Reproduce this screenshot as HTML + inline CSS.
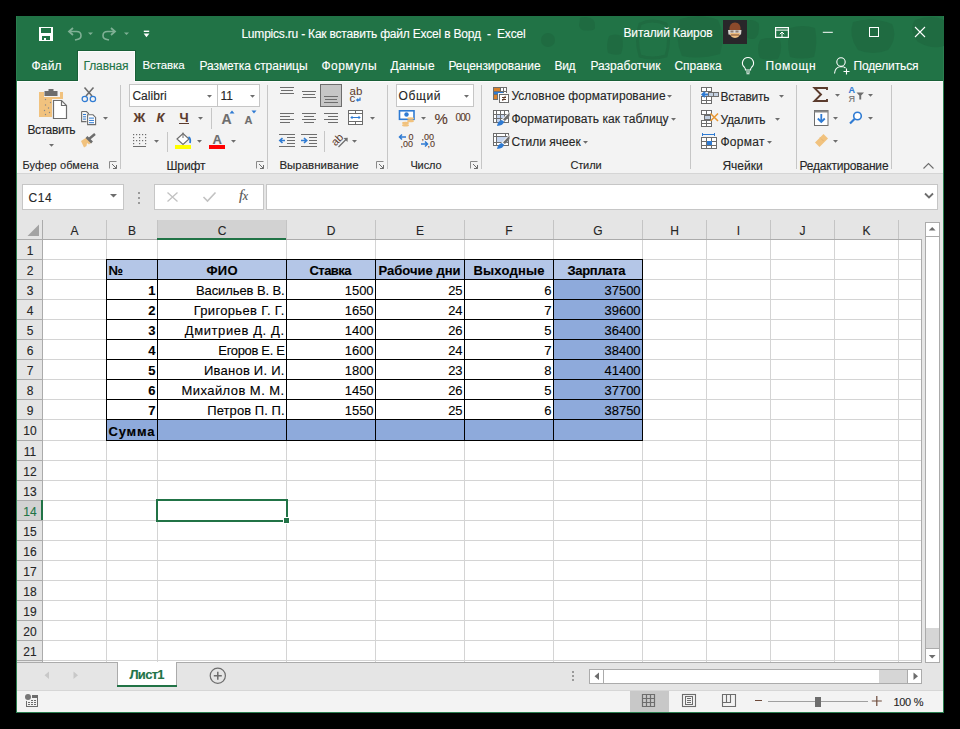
<!DOCTYPE html><html><head><meta charset="utf-8"><style>*{margin:0;padding:0;box-sizing:border-box}
html,body{width:960px;height:729px;overflow:hidden;background:#000}
.a{position:absolute}
.t{position:absolute;white-space:pre;font-family:"Liberation Sans",sans-serif;line-height:1;-webkit-text-stroke:0.12px currentColor}
svg{position:absolute;overflow:visible}</style></head><body>
<div class="a" style="left:16px;top:16px;width:928px;height:697px;background:#f3f3f3;"></div>
<div class="a" style="left:16px;top:16px;width:928px;height:65px;background:#217346;"></div>
<div class="a" style="left:16px;top:16px;width:1px;height:697px;background:#2a7e4f;"></div>
<div class="a" style="left:943px;top:16px;width:1px;height:697px;background:#2a7e4f;"></div>
<div class="a" style="left:16px;top:712px;width:928px;height:1px;background:#2a7e4f;"></div>
<div class="a" style="left:17px;top:80px;width:926px;height:1px;background:#185f37;"></div>
<div class="a" style="left:17px;top:81px;width:926px;height:1px;background:#fcfcfc;"></div>
<div class="a" style="left:17px;top:81px;width:1px;height:92px;background:#fcfcfc;"></div>
<div class="a" style="left:77px;top:50px;width:59px;height:31px;background:#185f37;"></div>
<div class="a" style="left:78px;top:51px;width:57px;height:31px;background:#fcfcfc;"></div>
<div class="a" style="left:79px;top:52px;width:55px;height:30px;background:#f3f3f3;"></div>
<div class="a" style="left:17px;top:173px;width:926px;height:1px;background:#d5d5d5;"></div>
<div class="a" style="left:17px;top:174px;width:926px;height:46px;background:#e5e5e5;"></div>
<svg style="left:540px;top:16px;" width="404" height="64" viewBox="0 0 404 64"><g fill="#1f6b41">
<path d="M40,3 Q38,1 46,1 Q56,2 55,10 Q56,15 48,14.5 Q39,15 39,9 Z"/>
<circle cx="8" cy="24" r="7"/>
<path d="M69,20 Q75,17 82,20 Q84,30 81,38 Q75,40 68,37 Q66,28 69,20 Z"/>
<path d="M100,8 Q112,2 126,8 Q131,24 126,40 Q112,44 100,40 Q95,24 100,8 Z" fill="none" stroke="#1f6b41" stroke-width="3"/>
<path d="M140,3 Q160,-3 178,4 Q186,20 180,38 Q160,44 142,40 Q134,22 140,3 Z"/>
<path d="M205,5 Q214,2 219,8 Q220,20 214,23 Q206,24 204,16 Z"/>
<path d="M220,24 Q228,20 240,24 Q243,34 238,43 Q228,45 220,42 Q216,33 220,24 Z"/>
<path d="M250,12 Q262,8 275,12 Q278,28 274,41 Q262,44 250,41 Q246,26 250,12 Z"/>
<path d="M313,6 Q333,0 352,8 Q358,22 348,34 Q333,40 318,34 Q308,20 313,6 Z"/>
<path d="M375,4 Q392,-2 404,4 V30 Q392,34 378,26 Q368,14 375,4 Z"/>
</g></svg>
<div class="t" style="left:241.40px;top:28px;font-size:12px;color:#ffffff;letter-spacing:-0.203px;">Lumpics.ru - Как вставить файл Excel в Ворд  -  Excel</div>
<div class="t" style="left:623.40px;top:27px;font-size:12px;color:#ffffff;letter-spacing:-0.106px;">Виталий Каиров</div>
<div class="t" style="left:31.40px;top:60px;font-size:12px;color:#ffffff;letter-spacing:0.228px;">Файл</div>
<div class="t" style="left:83.40px;top:60px;font-size:12px;color:#217346;letter-spacing:-0.081px;">Главная</div>
<div class="t" style="left:142.40px;top:60px;font-size:11.5px;color:#ffffff;letter-spacing:-0.092px;">Вставка</div>
<div class="t" style="left:199.40px;top:60px;font-size:12px;color:#ffffff;letter-spacing:-0.042px;">Разметка страницы</div>
<div class="t" style="left:321.40px;top:60px;font-size:12px;color:#ffffff;letter-spacing:0.497px;">Формулы</div>
<div class="t" style="left:390.40px;top:60px;font-size:12px;color:#ffffff;letter-spacing:0.168px;">Данные</div>
<div class="t" style="left:448.40px;top:60px;font-size:12px;color:#ffffff;letter-spacing:-0.036px;">Рецензирование</div>
<div class="t" style="left:554.40px;top:60px;font-size:12px;color:#ffffff;letter-spacing:-0.259px;">Вид</div>
<div class="t" style="left:590.40px;top:60px;font-size:12px;color:#ffffff;letter-spacing:0.022px;">Разработчик</div>
<div class="t" style="left:674.40px;top:60px;font-size:12px;color:#ffffff;letter-spacing:0.020px;">Справка</div>
<div class="t" style="left:765.40px;top:60px;font-size:12px;color:#ffffff;letter-spacing:0.693px;">Помощн</div>
<div class="t" style="left:853.40px;top:60px;font-size:12px;color:#ffffff;letter-spacing:-0.118px;">Поделиться</div>
<div class="a" style="left:17px;top:220px;width:926px;height:443px;background:#e5e5e5;"></div>
<div class="a" style="left:43px;top:240px;width:878px;height:422px;background:#ffffff;"></div>
<div class="a" style="left:17px;top:240px;width:25px;height:423px;background:#e5e5e5;"></div>
<div class="a" style="left:157px;top:220px;width:129px;height:19px;background:#d2d2d2;"></div>
<div class="a" style="left:17px;top:500px;width:25px;height:20px;background:#d2d2d2;"></div>
<div class="a" style="left:43px;top:259px;width:878px;height:1px;background:#d4d4d4;"></div>
<div class="a" style="left:17px;top:259px;width:25px;height:1px;background:#ababab;"></div>
<div class="a" style="left:43px;top:279px;width:878px;height:1px;background:#d4d4d4;"></div>
<div class="a" style="left:17px;top:279px;width:25px;height:1px;background:#ababab;"></div>
<div class="a" style="left:43px;top:299px;width:878px;height:1px;background:#d4d4d4;"></div>
<div class="a" style="left:17px;top:299px;width:25px;height:1px;background:#ababab;"></div>
<div class="a" style="left:43px;top:319px;width:878px;height:1px;background:#d4d4d4;"></div>
<div class="a" style="left:17px;top:319px;width:25px;height:1px;background:#ababab;"></div>
<div class="a" style="left:43px;top:339px;width:878px;height:1px;background:#d4d4d4;"></div>
<div class="a" style="left:17px;top:339px;width:25px;height:1px;background:#ababab;"></div>
<div class="a" style="left:43px;top:359px;width:878px;height:1px;background:#d4d4d4;"></div>
<div class="a" style="left:17px;top:359px;width:25px;height:1px;background:#ababab;"></div>
<div class="a" style="left:43px;top:379px;width:878px;height:1px;background:#d4d4d4;"></div>
<div class="a" style="left:17px;top:379px;width:25px;height:1px;background:#ababab;"></div>
<div class="a" style="left:43px;top:399px;width:878px;height:1px;background:#d4d4d4;"></div>
<div class="a" style="left:17px;top:399px;width:25px;height:1px;background:#ababab;"></div>
<div class="a" style="left:43px;top:419px;width:878px;height:1px;background:#d4d4d4;"></div>
<div class="a" style="left:17px;top:419px;width:25px;height:1px;background:#ababab;"></div>
<div class="a" style="left:43px;top:440px;width:878px;height:1px;background:#d4d4d4;"></div>
<div class="a" style="left:17px;top:440px;width:25px;height:1px;background:#ababab;"></div>
<div class="a" style="left:43px;top:460px;width:878px;height:1px;background:#d4d4d4;"></div>
<div class="a" style="left:17px;top:460px;width:25px;height:1px;background:#ababab;"></div>
<div class="a" style="left:43px;top:480px;width:878px;height:1px;background:#d4d4d4;"></div>
<div class="a" style="left:17px;top:480px;width:25px;height:1px;background:#ababab;"></div>
<div class="a" style="left:43px;top:500px;width:878px;height:1px;background:#d4d4d4;"></div>
<div class="a" style="left:17px;top:500px;width:25px;height:1px;background:#ababab;"></div>
<div class="a" style="left:43px;top:520px;width:878px;height:1px;background:#d4d4d4;"></div>
<div class="a" style="left:17px;top:520px;width:25px;height:1px;background:#ababab;"></div>
<div class="a" style="left:43px;top:540px;width:878px;height:1px;background:#d4d4d4;"></div>
<div class="a" style="left:17px;top:540px;width:25px;height:1px;background:#ababab;"></div>
<div class="a" style="left:43px;top:560px;width:878px;height:1px;background:#d4d4d4;"></div>
<div class="a" style="left:17px;top:560px;width:25px;height:1px;background:#ababab;"></div>
<div class="a" style="left:43px;top:580px;width:878px;height:1px;background:#d4d4d4;"></div>
<div class="a" style="left:17px;top:580px;width:25px;height:1px;background:#ababab;"></div>
<div class="a" style="left:43px;top:600px;width:878px;height:1px;background:#d4d4d4;"></div>
<div class="a" style="left:17px;top:600px;width:25px;height:1px;background:#ababab;"></div>
<div class="a" style="left:43px;top:620px;width:878px;height:1px;background:#d4d4d4;"></div>
<div class="a" style="left:17px;top:620px;width:25px;height:1px;background:#ababab;"></div>
<div class="a" style="left:43px;top:640px;width:878px;height:1px;background:#d4d4d4;"></div>
<div class="a" style="left:17px;top:640px;width:25px;height:1px;background:#ababab;"></div>
<div class="a" style="left:43px;top:660px;width:878px;height:1px;background:#d4d4d4;"></div>
<div class="a" style="left:17px;top:660px;width:25px;height:1px;background:#ababab;"></div>
<div class="a" style="left:17px;top:239px;width:904px;height:1px;background:#ababab;"></div>
<div class="a" style="left:17px;top:662px;width:905px;height:1px;background:#ababab;"></div>
<div class="a" style="left:106px;top:240px;width:1px;height:422px;background:#d4d4d4;"></div>
<div class="a" style="left:106px;top:220px;width:1px;height:19px;background:#c4c4c4;"></div>
<div class="a" style="left:157px;top:240px;width:1px;height:422px;background:#d4d4d4;"></div>
<div class="a" style="left:157px;top:220px;width:1px;height:19px;background:#c4c4c4;"></div>
<div class="a" style="left:286px;top:240px;width:1px;height:422px;background:#d4d4d4;"></div>
<div class="a" style="left:286px;top:220px;width:1px;height:19px;background:#c4c4c4;"></div>
<div class="a" style="left:375px;top:240px;width:1px;height:422px;background:#d4d4d4;"></div>
<div class="a" style="left:375px;top:220px;width:1px;height:19px;background:#c4c4c4;"></div>
<div class="a" style="left:464px;top:240px;width:1px;height:422px;background:#d4d4d4;"></div>
<div class="a" style="left:464px;top:220px;width:1px;height:19px;background:#c4c4c4;"></div>
<div class="a" style="left:553px;top:240px;width:1px;height:422px;background:#d4d4d4;"></div>
<div class="a" style="left:553px;top:220px;width:1px;height:19px;background:#c4c4c4;"></div>
<div class="a" style="left:642px;top:240px;width:1px;height:422px;background:#d4d4d4;"></div>
<div class="a" style="left:642px;top:220px;width:1px;height:19px;background:#c4c4c4;"></div>
<div class="a" style="left:706px;top:240px;width:1px;height:422px;background:#d4d4d4;"></div>
<div class="a" style="left:706px;top:220px;width:1px;height:19px;background:#c4c4c4;"></div>
<div class="a" style="left:770px;top:240px;width:1px;height:422px;background:#d4d4d4;"></div>
<div class="a" style="left:770px;top:220px;width:1px;height:19px;background:#c4c4c4;"></div>
<div class="a" style="left:834px;top:240px;width:1px;height:422px;background:#d4d4d4;"></div>
<div class="a" style="left:834px;top:220px;width:1px;height:19px;background:#c4c4c4;"></div>
<div class="a" style="left:898px;top:240px;width:1px;height:422px;background:#d4d4d4;"></div>
<div class="a" style="left:898px;top:220px;width:1px;height:19px;background:#c4c4c4;"></div>
<div class="a" style="left:42px;top:220px;width:1px;height:442px;background:#ababab;"></div>
<div class="a" style="left:921px;top:239px;width:1px;height:424px;background:#ababab;"></div>
<div class="a" style="left:41px;top:500px;width:2px;height:20px;background:#217346;"></div>
<div class="a" style="left:157px;top:238px;width:129px;height:2px;background:#217346;"></div>
<div class="t" style="left:70.49px;top:225px;font-size:12px;color:#262626;">A</div>
<div class="t" style="left:127.99px;top:225px;font-size:12px;color:#262626;">B</div>
<div class="t" style="left:217.66px;top:225px;font-size:12px;color:#262626;">C</div>
<div class="t" style="left:326.66px;top:225px;font-size:12px;color:#262626;">D</div>
<div class="t" style="left:415.99px;top:225px;font-size:12px;color:#262626;">E</div>
<div class="t" style="left:505.33px;top:225px;font-size:12px;color:#262626;">F</div>
<div class="t" style="left:593.33px;top:225px;font-size:12px;color:#262626;">G</div>
<div class="t" style="left:670.16px;top:225px;font-size:12px;color:#262626;">H</div>
<div class="t" style="left:736.83px;top:225px;font-size:12px;color:#262626;">I</div>
<div class="t" style="left:799.50px;top:225px;font-size:12px;color:#262626;">J</div>
<div class="t" style="left:862.49px;top:225px;font-size:12px;color:#262626;">K</div>
<div class="t" style="left:26.66px;top:245px;font-size:12px;color:#262626;">1</div>
<div class="t" style="left:26.66px;top:265px;font-size:12px;color:#262626;">2</div>
<div class="t" style="left:26.66px;top:285px;font-size:12px;color:#262626;">3</div>
<div class="t" style="left:26.66px;top:305px;font-size:12px;color:#262626;">4</div>
<div class="t" style="left:26.66px;top:325px;font-size:12px;color:#262626;">5</div>
<div class="t" style="left:26.66px;top:345px;font-size:12px;color:#262626;">6</div>
<div class="t" style="left:26.66px;top:365px;font-size:12px;color:#262626;">7</div>
<div class="t" style="left:26.66px;top:385px;font-size:12px;color:#262626;">8</div>
<div class="t" style="left:26.66px;top:405px;font-size:12px;color:#262626;">9</div>
<div class="t" style="left:23.32px;top:425px;font-size:12px;color:#262626;">10</div>
<div class="t" style="left:23.77px;top:446px;font-size:12px;color:#262626;">11</div>
<div class="t" style="left:23.32px;top:466px;font-size:12px;color:#262626;">12</div>
<div class="t" style="left:23.32px;top:486px;font-size:12px;color:#262626;">13</div>
<div class="t" style="left:23.32px;top:506px;font-size:12px;color:#217346;">14</div>
<div class="t" style="left:23.32px;top:526px;font-size:12px;color:#262626;">15</div>
<div class="t" style="left:23.32px;top:546px;font-size:12px;color:#262626;">16</div>
<div class="t" style="left:23.32px;top:566px;font-size:12px;color:#262626;">17</div>
<div class="t" style="left:23.32px;top:586px;font-size:12px;color:#262626;">18</div>
<div class="t" style="left:23.32px;top:606px;font-size:12px;color:#262626;">19</div>
<div class="t" style="left:23.32px;top:626px;font-size:12px;color:#262626;">20</div>
<div class="t" style="left:23.32px;top:646px;font-size:12px;color:#262626;">21</div>
<div class="a" style="left:107px;top:260px;width:535px;height:19px;background:#b4c6e7;"></div>
<div class="a" style="left:554px;top:280px;width:88px;height:19px;background:#8eaadb;"></div>
<div class="a" style="left:554px;top:300px;width:88px;height:19px;background:#8eaadb;"></div>
<div class="a" style="left:554px;top:320px;width:88px;height:19px;background:#8eaadb;"></div>
<div class="a" style="left:554px;top:340px;width:88px;height:19px;background:#8eaadb;"></div>
<div class="a" style="left:554px;top:360px;width:88px;height:19px;background:#8eaadb;"></div>
<div class="a" style="left:554px;top:380px;width:88px;height:19px;background:#8eaadb;"></div>
<div class="a" style="left:554px;top:400px;width:88px;height:19px;background:#8eaadb;"></div>
<div class="a" style="left:107px;top:420px;width:535px;height:20px;background:#8eaadb;"></div>
<div class="a" style="left:106px;top:259px;width:537px;height:1px;background:#000;"></div>
<div class="a" style="left:106px;top:279px;width:537px;height:1px;background:#000;"></div>
<div class="a" style="left:106px;top:299px;width:537px;height:1px;background:#000;"></div>
<div class="a" style="left:106px;top:319px;width:537px;height:1px;background:#000;"></div>
<div class="a" style="left:106px;top:339px;width:537px;height:1px;background:#000;"></div>
<div class="a" style="left:106px;top:359px;width:537px;height:1px;background:#000;"></div>
<div class="a" style="left:106px;top:379px;width:537px;height:1px;background:#000;"></div>
<div class="a" style="left:106px;top:399px;width:537px;height:1px;background:#000;"></div>
<div class="a" style="left:106px;top:419px;width:537px;height:1px;background:#000;"></div>
<div class="a" style="left:106px;top:440px;width:537px;height:1px;background:#000;"></div>
<div class="a" style="left:106px;top:259px;width:1px;height:182px;background:#000;"></div>
<div class="a" style="left:157px;top:259px;width:1px;height:182px;background:#000;"></div>
<div class="a" style="left:286px;top:259px;width:1px;height:182px;background:#000;"></div>
<div class="a" style="left:375px;top:259px;width:1px;height:182px;background:#000;"></div>
<div class="a" style="left:464px;top:259px;width:1px;height:182px;background:#000;"></div>
<div class="a" style="left:553px;top:259px;width:1px;height:182px;background:#000;"></div>
<div class="a" style="left:642px;top:259px;width:1px;height:182px;background:#000;"></div>
<div class="t" style="left:108.40px;top:264px;font-size:13px;color:#000;font-weight:700;">№</div>
<div class="t" style="left:206.40px;top:264px;font-size:13px;color:#000;font-weight:700;letter-spacing:0.319px;">ФИО</div>
<div class="t" style="left:309.40px;top:264px;font-size:13px;color:#000;font-weight:700;letter-spacing:-0.504px;">Ставка</div>
<div class="t" style="left:378.40px;top:264px;font-size:13px;color:#000;font-weight:700;letter-spacing:0.034px;">Рабочие дни</div>
<div class="t" style="left:473.40px;top:264px;font-size:13px;color:#000;font-weight:700;letter-spacing:0.227px;">Выходные</div>
<div class="t" style="left:567.40px;top:264px;font-size:13px;color:#000;font-weight:700;letter-spacing:-0.295px;">Зарплата</div>
<div class="t" style="left:148.37px;top:284px;font-size:13px;color:#000;font-weight:700;">1</div>
<div class="t" style="left:196.00px;top:284px;font-size:13px;color:#000;letter-spacing:-0.096px;">Васильев В. В.</div>
<div class="t" style="left:344.68px;top:284px;font-size:13px;color:#000;">1500</div>
<div class="t" style="left:448.13px;top:284px;font-size:13px;color:#000;">25</div>
<div class="t" style="left:544.37px;top:284px;font-size:13px;color:#000;">6</div>
<div class="t" style="left:604.44px;top:284px;font-size:13px;color:#000;">37500</div>
<div class="t" style="left:148.37px;top:304px;font-size:13px;color:#000;font-weight:700;">2</div>
<div class="t" style="left:193.67px;top:304px;font-size:13px;color:#000;letter-spacing:0.330px;">Григорьев Г. Г.</div>
<div class="t" style="left:344.68px;top:304px;font-size:13px;color:#000;">1650</div>
<div class="t" style="left:448.13px;top:304px;font-size:13px;color:#000;">24</div>
<div class="t" style="left:544.37px;top:304px;font-size:13px;color:#000;">7</div>
<div class="t" style="left:604.44px;top:304px;font-size:13px;color:#000;">39600</div>
<div class="t" style="left:148.37px;top:324px;font-size:13px;color:#000;font-weight:700;">3</div>
<div class="t" style="left:184.82px;top:324px;font-size:13px;color:#000;letter-spacing:0.580px;">Дмитриев Д. Д.</div>
<div class="t" style="left:344.68px;top:324px;font-size:13px;color:#000;">1400</div>
<div class="t" style="left:448.13px;top:324px;font-size:13px;color:#000;">26</div>
<div class="t" style="left:544.37px;top:324px;font-size:13px;color:#000;">5</div>
<div class="t" style="left:604.44px;top:324px;font-size:13px;color:#000;">36400</div>
<div class="t" style="left:148.37px;top:344px;font-size:13px;color:#000;font-weight:700;">4</div>
<div class="t" style="left:218.33px;top:344px;font-size:13px;color:#000;letter-spacing:-0.331px;">Егоров Е. Е</div>
<div class="t" style="left:344.68px;top:344px;font-size:13px;color:#000;">1600</div>
<div class="t" style="left:448.13px;top:344px;font-size:13px;color:#000;">24</div>
<div class="t" style="left:544.37px;top:344px;font-size:13px;color:#000;">7</div>
<div class="t" style="left:604.44px;top:344px;font-size:13px;color:#000;">38400</div>
<div class="t" style="left:148.37px;top:364px;font-size:13px;color:#000;font-weight:700;">5</div>
<div class="t" style="left:203.96px;top:364px;font-size:13px;color:#000;letter-spacing:0.237px;">Иванов И. И.</div>
<div class="t" style="left:344.68px;top:364px;font-size:13px;color:#000;">1800</div>
<div class="t" style="left:448.13px;top:364px;font-size:13px;color:#000;">23</div>
<div class="t" style="left:544.37px;top:364px;font-size:13px;color:#000;">8</div>
<div class="t" style="left:604.44px;top:364px;font-size:13px;color:#000;">41400</div>
<div class="t" style="left:148.37px;top:384px;font-size:13px;color:#000;font-weight:700;">6</div>
<div class="t" style="left:181.46px;top:384px;font-size:13px;color:#000;letter-spacing:0.444px;">Михайлов М. М.</div>
<div class="t" style="left:344.68px;top:384px;font-size:13px;color:#000;">1450</div>
<div class="t" style="left:448.13px;top:384px;font-size:13px;color:#000;">26</div>
<div class="t" style="left:544.37px;top:384px;font-size:13px;color:#000;">5</div>
<div class="t" style="left:604.44px;top:384px;font-size:13px;color:#000;">37700</div>
<div class="t" style="left:148.37px;top:404px;font-size:13px;color:#000;font-weight:700;">7</div>
<div class="t" style="left:207.35px;top:404px;font-size:13px;color:#000;letter-spacing:0.054px;">Петров П. П.</div>
<div class="t" style="left:344.68px;top:404px;font-size:13px;color:#000;">1550</div>
<div class="t" style="left:448.13px;top:404px;font-size:13px;color:#000;">25</div>
<div class="t" style="left:544.37px;top:404px;font-size:13px;color:#000;">6</div>
<div class="t" style="left:604.44px;top:404px;font-size:13px;color:#000;">38750</div>
<div class="t" style="left:108.40px;top:425px;font-size:13px;color:#000;font-weight:700;letter-spacing:0.863px;">Сумма</div>
<svg style="left:36px;top:24px" width="20" height="20" viewBox="36 24 20 20"><rect x="39" y="27" width="14" height="14" fill="#ffffff"/><rect x="41" y="28" width="10" height="5" fill="#217346"/><rect x="42" y="36" width="8" height="4" fill="#217346"/><rect x="44" y="38" width="2" height="2" fill="#ffffff"/></svg>
<svg style="left:64px;top:24px;" width="20" height="20" viewBox="0 0 20 20"><path d="M9,4 L5,7.5 L9,11" fill="none" stroke="#7fb095" stroke-width="1.8"/><path d="M5,7.5 H12.5 Q17,7.5 17,11.5 Q17,15 13,15.5 L11,16" fill="none" stroke="#7fb095" stroke-width="1.6"/></svg>
<svg style="left:86px;top:30px;" width="8" height="6" viewBox="0 0 8 6"><path d="M2,2.5 H7 L4.5,5 Z" fill="#7fb095"/></svg>
<svg style="left:100px;top:24px;" width="20" height="20" viewBox="0 0 20 20"><path d="M11,4 L15,7.5 L11,11" fill="none" stroke="#7fb095" stroke-width="1.8"/><path d="M15,7.5 H7.5 Q3,7.5 3,11.5 Q3,15 7,15.5 L9,16" fill="none" stroke="#7fb095" stroke-width="1.6"/></svg>
<svg style="left:122px;top:30px;" width="8" height="6" viewBox="0 0 8 6"><path d="M2,2.5 H7 L4.5,5 Z" fill="#7fb095"/></svg>
<svg style="left:140px;top:28px;" width="12" height="12" viewBox="0 0 12 12"><rect x="3.8" y="2.6" width="5.4" height="1.4" fill="#ffffff"/><path d="M3.6,5.6 H9.4 L6.5,9.2 Z" fill="#ffffff"/></svg>
<svg style="left:723px;top:20px" width="24" height="24" viewBox="723 20 24 24"><rect x="723" y="20" width="24" height="24" fill="#29262a"/><path d="M729.5,30 Q729,22.5 735,22.5 Q741,22.5 740.5,30 Z" fill="#8b4a2b"/><path d="M728,30 H741.5 L741,34.5 Q735,36 728.5,34.5 Z" fill="#d8d4d0"/><path d="M730,33 Q730,37.5 735,38 Q740,37.5 740,33 Z" fill="#eebf82"/><rect x="730.5" y="30.5" width="3" height="2" fill="#8d7c70"/><rect x="735.5" y="30.5" width="3" height="2" fill="#8d7c70"/><rect x="731" y="34.5" width="8" height="1" fill="#7a4a30"/></svg>
<svg style="left:774px;top:26px;" width="16" height="12" viewBox="0 0 16 12"><rect x="1.6" y="1.6" width="12.8" height="9.8" fill="none" stroke="#ffffff" stroke-width="1.2"/><path d="M1.5,4.1 H14.5" stroke="#ffffff" stroke-width="1"/><path d="M8,11 V6.2 M5.8,8.2 L8,6 L10.2,8.2" fill="none" stroke="#ffffff" stroke-width="1"/></svg>
<svg style="left:822px;top:31px;" width="12" height="3" viewBox="0 0 12 3"><rect x="0.8" y="0.8" width="10" height="1" fill="#ffffff"/></svg>
<svg style="left:868px;top:26px;" width="12" height="12" viewBox="0 0 12 12"><rect x="1.5" y="1.5" width="9" height="9" fill="none" stroke="#ffffff" stroke-width="1"/></svg>
<svg style="left:914px;top:26px;" width="12" height="12" viewBox="0 0 12 12"><path d="M1,1 L11,11 M11,1 L1,11" stroke="#ffffff" stroke-width="1.1"/></svg>
<svg style="left:740px;top:56px;" width="16" height="19" viewBox="0 0 16 19"><path d="M8,1.5 A5.5,5.5 0 0 0 4.2,11 Q5.5,12.5 5.5,14 H10.5 Q10.5,12.5 11.8,11 A5.5,5.5 0 0 0 8,1.5 Z" fill="none" stroke="#ffffff" stroke-width="1.1"/><path d="M6,16 H10 M6.5,17.8 H9.5" stroke="#ffffff" stroke-width="1.1"/></svg>
<svg style="left:833px;top:56px;" width="18" height="19" viewBox="0 0 18 19"><circle cx="8" cy="6" r="4.2" fill="none" stroke="#ffffff" stroke-width="1.1"/><path d="M1.5,17.5 Q2,11 8,10.5 Q11,10.5 12.5,12" fill="none" stroke="#ffffff" stroke-width="1.1"/><path d="M13.5,12.5 V18.5 M10.5,15.5 H16.5" stroke="#ffffff" stroke-width="1.1"/></svg>
<div class="a" style="left:120px;top:85px;width:1px;height:84px;background:#c6c6c6;"></div>
<div class="a" style="left:267px;top:85px;width:1px;height:84px;background:#c6c6c6;"></div>
<div class="a" style="left:387px;top:85px;width:1px;height:84px;background:#c6c6c6;"></div>
<div class="a" style="left:481px;top:85px;width:1px;height:84px;background:#c6c6c6;"></div>
<div class="a" style="left:690px;top:85px;width:1px;height:84px;background:#c6c6c6;"></div>
<div class="a" style="left:796px;top:85px;width:1px;height:84px;background:#c6c6c6;"></div>
<div class="a" style="left:891px;top:85px;width:1px;height:84px;background:#c6c6c6;"></div>
<svg style="left:36px;top:86px;" width="34" height="36" viewBox="0 0 34 36"><rect x="3" y="6" width="24" height="25" fill="#f1c27e"/><rect x="8" y="2" width="16" height="9" fill="#f3f3f3"/><rect x="8.5" y="5" width="13" height="5" fill="#6d6d6d"/><rect x="12.5" y="3" width="5" height="3" fill="#6d6d6d"/><rect x="16" y="13" width="18" height="22" fill="#f3f3f3"/><path d="M17.5,14.5 H25.5 L30.5,19.5 V32.5 H17.5 Z" fill="#fff" stroke="#6d6d6d" stroke-width="1.2"/><path d="M25.5,14.5 V19.5 H30.5" fill="none" stroke="#6d6d6d" stroke-width="1.2"/><circle cx="9.5" cy="13.5" r="0.7" fill="#888"/><circle cx="14.5" cy="16.5" r="0.7" fill="#888"/><circle cx="9.5" cy="19" r="0.7" fill="#888"/><circle cx="12.5" cy="22" r="0.7" fill="#888"/><circle cx="8.5" cy="24.5" r="0.7" fill="#888"/><circle cx="13.5" cy="26.5" r="0.7" fill="#888"/><circle cx="9.5" cy="28.5" r="0.7" fill="#888"/></svg>
<div class="t" style="left:27.40px;top:124px;font-size:12.01px;color:#262626;letter-spacing:-0.382px;">Вставить</div>
<svg style="left:49px;top:144px;" width="6" height="4" viewBox="0 0 6 4"><path d="M0,0 H5 L2.5,2.8 Z" fill="#6d6d6d"/></svg>
<svg style="left:80px;top:86px;" width="18" height="18" viewBox="0 0 18 18"><path d="M4.5,1.5 L12,10 M13.5,1.5 L6,10" stroke="#6d6d6d" stroke-width="1.6"/><circle cx="4.8" cy="13" r="2.7" fill="none" stroke="#2f7bd3" stroke-width="1.2"/><circle cx="12.9" cy="13" r="2.7" fill="none" stroke="#2f7bd3" stroke-width="1.2"/></svg>
<svg style="left:80px;top:110px;" width="18" height="17" viewBox="0 0 18 17"><path d="M1.6,1.5 H6.5 L8.5,3.5 V4 M1.6,1.5 V11.6 H6.5" fill="none" stroke="#6d6d6d" stroke-width="1.1"/><rect x="3" y="4" width="3" height="1" fill="#2f7bd3"/><rect x="3" y="6.3" width="3" height="1" fill="#2f7bd3"/><rect x="3" y="8.6" width="3" height="1" fill="#2f7bd3"/><path d="M7.6,4.8 H13 L15.6,7.4 V14.6 H7.6 Z" fill="#fff" stroke="#6d6d6d" stroke-width="1.1"/><rect x="9" y="7.6" width="5" height="1" fill="#2f7bd3"/><rect x="9" y="9.9" width="5" height="1" fill="#2f7bd3"/><rect x="9" y="12.2" width="5" height="1" fill="#2f7bd3"/></svg>
<svg style="left:103px;top:117px;" width="6" height="4" viewBox="0 0 6 4"><path d="M0,0 H5 L2.5,2.8 Z" fill="#6d6d6d"/></svg>
<svg style="left:80px;top:132px;" width="18" height="17" viewBox="0 0 18 17"><path d="M9,7 L15,2" stroke="#6d6d6d" stroke-width="2.4"/><path d="M6.5,5.5 L11.5,10.5 L9,12.5 L7,11 L6.5,14 L4,15.5 L1,9 Z" fill="#f1c27e"/><path d="M6.5,5 L12,10.5" stroke="#6d6d6d" stroke-width="2.6"/></svg>
<div class="t" style="left:22.40px;top:160px;font-size:11px;color:#262626;letter-spacing:0.132px;">Буфер обмена</div>
<svg style="left:109px;top:161px;" width="9" height="8" viewBox="0 0 9 8"><path d="M0.5,7.5 V0.5 H7.5" fill="none" stroke="#8a8a8a" stroke-width="1"/><path d="M3,3 L7.5,7.5 M4,7.5 H7.5 V4" fill="none" stroke="#6d6d6d" stroke-width="1"/></svg>
<div class="a" style="left:129px;top:84px;width:131px;height:23px;background:#c6c6c6;"></div>
<div class="a" style="left:130px;top:85px;width:87px;height:21px;background:#ffffff;"></div>
<div class="a" style="left:218px;top:85px;width:41px;height:21px;background:#ffffff;"></div>
<div class="t" style="left:132.40px;top:90px;font-size:12px;color:#262626;letter-spacing:0.031px;">Calibri</div>
<svg style="left:207px;top:95px;" width="6" height="4" viewBox="0 0 6 4"><path d="M0,0 H5 L2.5,2.8 Z" fill="#6d6d6d"/></svg>
<div class="t" style="left:220.40px;top:90px;font-size:12px;color:#262626;">11</div>
<svg style="left:250px;top:95px;" width="6" height="4" viewBox="0 0 6 4"><path d="M0,0 H5 L2.5,2.8 Z" fill="#6d6d6d"/></svg>
<div class="t" style="left:133.40px;top:111px;font-size:13px;color:#5b3b2d;font-weight:700;">Ж</div>
<div class="t" style="left:156.40px;top:111px;font-size:13px;color:#5b3b2d;font-weight:700;font-style:italic;">К</div>
<div class="t" style="left:179.40px;top:111px;font-size:13px;color:#5b3b2d;font-weight:700;">Ч</div>
<div class="a" style="left:179px;top:123px;width:10px;height:1px;background:#5b3b2d;"></div>
<svg style="left:198px;top:117px;" width="6" height="4" viewBox="0 0 6 4"><path d="M0,0 H5 L2.5,2.8 Z" fill="#6d6d6d"/></svg>
<div class="a" style="left:211px;top:108px;width:1px;height:21px;background:#c6c6c6;"></div>
<div class="t" style="left:221.40px;top:112px;font-size:14px;color:#6d6d6d;font-weight:700;">A</div>
<svg style="left:229px;top:110px;" width="7" height="4" viewBox="0 0 7 4"><path d="M0.5,3.5 H5.5 L3,0.5 Z" fill="#2f7bd3"/></svg>
<div class="t" style="left:244.40px;top:115px;font-size:11px;color:#6d6d6d;font-weight:700;">A</div>
<svg style="left:251px;top:110px;" width="7" height="4" viewBox="0 0 7 4"><path d="M0.5,0.5 H5.5 L3,3.5 Z" fill="#2f7bd3"/></svg>
<svg style="left:130px;top:130px" width="20" height="20" viewBox="130 130 20 20"><rect x="133" y="134" width="1.2" height="1.2" fill="#6d6d6d"/><rect x="136" y="134" width="1.2" height="1.2" fill="#6d6d6d"/><rect x="139" y="134" width="1.2" height="1.2" fill="#6d6d6d"/><rect x="142" y="134" width="1.2" height="1.2" fill="#6d6d6d"/><rect x="145" y="134" width="1.2" height="1.2" fill="#6d6d6d"/><rect x="133" y="137" width="1.2" height="1.2" fill="#6d6d6d"/><rect x="139" y="137" width="1.2" height="1.2" fill="#6d6d6d"/><rect x="145" y="137" width="1.2" height="1.2" fill="#6d6d6d"/><rect x="133" y="140" width="1.2" height="1.2" fill="#6d6d6d"/><rect x="136" y="140" width="1.2" height="1.2" fill="#6d6d6d"/><rect x="139" y="140" width="1.2" height="1.2" fill="#6d6d6d"/><rect x="142" y="140" width="1.2" height="1.2" fill="#6d6d6d"/><rect x="145" y="140" width="1.2" height="1.2" fill="#6d6d6d"/><rect x="133" y="143" width="1.2" height="1.2" fill="#6d6d6d"/><rect x="139" y="143" width="1.2" height="1.2" fill="#6d6d6d"/><rect x="145" y="143" width="1.2" height="1.2" fill="#6d6d6d"/><rect x="133" y="146" width="13" height="1" fill="#6d6d6d"/></svg>
<svg style="left:154px;top:140px;" width="6" height="4" viewBox="0 0 6 4"><path d="M0,0 H5 L2.5,2.8 Z" fill="#6d6d6d"/></svg>
<div class="a" style="left:167px;top:132px;width:1px;height:20px;background:#c6c6c6;"></div>
<svg style="left:174px;top:132px;" width="19" height="18" viewBox="0 0 19 18"><path d="M3,7 L9,1.5 L15,7 L9,12.5 Z" fill="#fff" stroke="#6d6d6d" stroke-width="1.1"/><path d="M9,6 V0.5" stroke="#6d6d6d" stroke-width="1"/><path d="M14.5,5 Q17,6.5 16,11" fill="none" stroke="#2f7bd3" stroke-width="1.8"/><rect x="1" y="13" width="16" height="4" fill="#ffff00"/></svg>
<svg style="left:197px;top:140px;" width="6" height="4" viewBox="0 0 6 4"><path d="M0,0 H5 L2.5,2.8 Z" fill="#6d6d6d"/></svg>
<div class="t" style="left:212.40px;top:133px;font-size:13px;color:#6d6d6d;font-weight:700;">A</div>
<div class="a" style="left:209px;top:145px;width:16px;height:4px;background:#ff0000;"></div>
<svg style="left:231px;top:140px;" width="6" height="4" viewBox="0 0 6 4"><path d="M0,0 H5 L2.5,2.8 Z" fill="#6d6d6d"/></svg>
<div class="t" style="left:166.40px;top:160px;font-size:12px;color:#262626;letter-spacing:-0.071px;">Шрифт</div>
<svg style="left:256px;top:161px;" width="9" height="8" viewBox="0 0 9 8"><path d="M0.5,7.5 V0.5 H7.5" fill="none" stroke="#8a8a8a" stroke-width="1"/><path d="M3,3 L7.5,7.5 M4,7.5 H7.5 V4" fill="none" stroke="#6d6d6d" stroke-width="1"/></svg>
<svg style="left:278px;top:84px;" width="18" height="16" viewBox="0 0 18 16"><rect x="2" y="3" width="14" height="1" fill="#6d6d6d"/><rect x="3" y="6" width="12" height="1" fill="#6d6d6d"/><rect x="2" y="9" width="14" height="1" fill="#6d6d6d"/></svg>
<svg style="left:300px;top:84px;" width="18" height="16" viewBox="0 0 18 16"><rect x="2" y="7" width="14" height="1" fill="#6d6d6d"/><rect x="3" y="10" width="12" height="1" fill="#6d6d6d"/><rect x="2" y="13" width="14" height="1" fill="#6d6d6d"/></svg>
<div class="a" style="left:320px;top:84px;width:22px;height:23px;background:#6d6d6d;"></div>
<div class="a" style="left:321px;top:85px;width:20px;height:21px;background:#c6c6c6;"></div>
<svg style="left:320px;top:84px;" width="22" height="23" viewBox="0 0 22 23"><rect x="4" y="12" width="14" height="1" fill="#6d6d6d"/><rect x="5" y="15" width="12" height="1" fill="#6d6d6d"/><rect x="4" y="18" width="14" height="1" fill="#6d6d6d"/></svg>
<svg style="left:344px;top:84px;" width="24" height="24" viewBox="0 0 24 24"><text x="5.6" y="11" font-family="Liberation Sans" font-size="11.5" fill="#5b3b2d">ab</text><text x="5.6" y="18" font-family="Liberation Sans" font-size="11.5" fill="#5b3b2d">c</text><path d="M16,13.5 V16 H12.8 M14.2,14.6 L12.8,16 L14.2,17.4" fill="none" stroke="#2f7bd3" stroke-width="1.3"/></svg>
<svg style="left:278px;top:110px;" width="18" height="16" viewBox="0 0 18 16"><rect x="2" y="3" width="14" height="1" fill="#6d6d6d"/><rect x="2" y="6" width="10" height="1" fill="#6d6d6d"/><rect x="2" y="9" width="14" height="1" fill="#6d6d6d"/><rect x="2" y="12" width="10" height="1" fill="#6d6d6d"/></svg>
<svg style="left:300px;top:110px;" width="18" height="16" viewBox="0 0 18 16"><rect x="2" y="3" width="14" height="1" fill="#6d6d6d"/><rect x="4" y="6" width="10" height="1" fill="#6d6d6d"/><rect x="2" y="9" width="14" height="1" fill="#6d6d6d"/><rect x="4" y="12" width="10" height="1" fill="#6d6d6d"/></svg>
<svg style="left:322px;top:110px;" width="18" height="16" viewBox="0 0 18 16"><rect x="2" y="3" width="14" height="1" fill="#6d6d6d"/><rect x="6" y="6" width="10" height="1" fill="#6d6d6d"/><rect x="2" y="9" width="14" height="1" fill="#6d6d6d"/><rect x="6" y="12" width="10" height="1" fill="#6d6d6d"/></svg>
<svg style="left:347px;top:109px;" width="18" height="17" viewBox="0 0 18 17"><rect x="1.5" y="1.5" width="14" height="14" fill="#fff" stroke="#6d6d6d" stroke-width="1"/><path d="M1.5,4.5 H15.5 M1.5,12.5 H15.5 M8.5,1.5 V4.5 M8.5,12.5 V15.5" stroke="#6d6d6d" stroke-width="1"/><path d="M4,8.5 H13 M5.5,7 L4,8.5 L5.5,10 M11.5,7 L13,8.5 L11.5,10" fill="none" stroke="#2f7bd3" stroke-width="1"/></svg>
<svg style="left:370px;top:117px;" width="6" height="4" viewBox="0 0 6 4"><path d="M0,0 H5 L2.5,2.8 Z" fill="#6d6d6d"/></svg>
<svg style="left:278px;top:132px;" width="19" height="17" viewBox="0 0 19 17"><rect x="1" y="2" width="16" height="1" fill="#6d6d6d"/><rect x="9" y="5" width="8" height="1" fill="#6d6d6d"/><rect x="9" y="8" width="8" height="1" fill="#6d6d6d"/><rect x="9" y="11" width="8" height="1" fill="#6d6d6d"/><rect x="1" y="14" width="16" height="1" fill="#6d6d6d"/><path d="M1.5,8.5 H7 M4.5,6 L1.8,8.5 L4.5,11" fill="none" stroke="#2f7bd3" stroke-width="1.6"/></svg>
<svg style="left:300px;top:132px;" width="19" height="17" viewBox="0 0 19 17"><rect x="1" y="2" width="16" height="1" fill="#6d6d6d"/><rect x="9" y="5" width="8" height="1" fill="#6d6d6d"/><rect x="9" y="8" width="8" height="1" fill="#6d6d6d"/><rect x="9" y="11" width="8" height="1" fill="#6d6d6d"/><rect x="1" y="14" width="16" height="1" fill="#6d6d6d"/><path d="M1,8.5 H7 M4,6 L6.7,8.5 L4,11" fill="none" stroke="#2f7bd3" stroke-width="1.6"/></svg>
<div class="a" style="left:324px;top:131px;width:1px;height:21px;background:#c6c6c6;"></div>
<svg style="left:328px;top:130px;" width="24" height="20" viewBox="0 0 24 20"><text x="0" y="0" transform="translate(7.5,16.5) rotate(-45)" font-family="Liberation Sans" font-size="11" fill="#5b3b2d">ab</text><path d="M10.5,17 L18.5,9" fill="none" stroke="#6d6d6d" stroke-width="1.2"/><path d="M15.5,8 L19.8,7.8 L19.5,12 Z" fill="#6d6d6d"/></svg>
<svg style="left:352px;top:140px;" width="6" height="4" viewBox="0 0 6 4"><path d="M0,0 H5 L2.5,2.8 Z" fill="#6d6d6d"/></svg>
<div class="t" style="left:279.40px;top:160px;font-size:11.5px;color:#262626;">Выравнивание</div>
<svg style="left:376px;top:161px;" width="9" height="8" viewBox="0 0 9 8"><path d="M0.5,7.5 V0.5 H7.5" fill="none" stroke="#8a8a8a" stroke-width="1"/><path d="M3,3 L7.5,7.5 M4,7.5 H7.5 V4" fill="none" stroke="#6d6d6d" stroke-width="1"/></svg>
<div class="a" style="left:396px;top:84px;width:78px;height:23px;background:#c6c6c6;"></div>
<div class="a" style="left:397px;top:85px;width:76px;height:21px;background:#ffffff;"></div>
<div class="t" style="left:398.40px;top:90px;font-size:12px;color:#262626;letter-spacing:0.675px;">Общий</div>
<svg style="left:464px;top:95px;" width="6" height="4" viewBox="0 0 6 4"><path d="M0,0 H5 L2.5,2.8 Z" fill="#6d6d6d"/></svg>
<svg style="left:398px;top:109px;" width="18" height="18" viewBox="0 0 18 18"><rect x="1.5" y="1.8" width="14.5" height="8.5" fill="#fff" stroke="#2f7bd3" stroke-width="1.6"/><circle cx="8.5" cy="5.5" r="2.2" fill="#2f7bd3"/><ellipse cx="12.5" cy="9.5" rx="3.5" ry="1.3" fill="#f1c27e"/><ellipse cx="12.5" cy="12" rx="3.5" ry="1.3" fill="#f1c27e"/><ellipse cx="7.5" cy="14" rx="3.5" ry="1.3" fill="#f1c27e"/><ellipse cx="7.5" cy="16.3" rx="3.5" ry="1.3" fill="#f1c27e"/></svg>
<svg style="left:421px;top:117px;" width="6" height="4" viewBox="0 0 6 4"><path d="M0,0 H5 L2.5,2.8 Z" fill="#6d6d6d"/></svg>
<div class="t" style="left:434.40px;top:111px;font-size:15px;color:#5b3b2d;">%</div>
<div class="t" style="left:455.40px;top:113px;font-size:10px;color:#5b3b2d;letter-spacing:-0.744px;">000</div>
<svg style="left:398px;top:132px;" width="18" height="18" viewBox="0 0 18 18"><path d="M1.5,5 H8 M4,2.5 L1.5,5 L4,7.5" fill="none" stroke="#2f7bd3" stroke-width="1.5"/></svg>
<div class="t" style="left:408.40px;top:133px;font-size:9px;color:#5b3b2d;">0</div>
<div class="t" style="left:400.40px;top:140px;font-size:9px;color:#5b3b2d;">,00</div>
<div class="t" style="left:421.40px;top:133px;font-size:9px;color:#5b3b2d;">,00</div>
<svg style="left:420px;top:137px;" width="10" height="10" viewBox="0 0 10 10"><path d="M1,7 H7.5 M5,4.5 L7.5,7 L5,9.5" fill="none" stroke="#2f7bd3" stroke-width="1.5"/></svg>
<div class="t" style="left:427.40px;top:140px;font-size:9px;color:#5b3b2d;">,0</div>
<div class="t" style="left:410.40px;top:160px;font-size:11px;color:#262626;letter-spacing:-0.110px;">Число</div>
<svg style="left:470px;top:161px;" width="9" height="8" viewBox="0 0 9 8"><path d="M0.5,7.5 V0.5 H7.5" fill="none" stroke="#8a8a8a" stroke-width="1"/><path d="M3,3 L7.5,7.5 M4,7.5 H7.5 V4" fill="none" stroke="#6d6d6d" stroke-width="1"/></svg>
<svg style="left:488px;top:84px" width="24" height="22" viewBox="488 84 24 22"><rect x="493" y="87" width="14" height="13" fill="#6d6d6d"/><rect x="494" y="88" width="6" height="3" fill="#d9822b"/><rect x="501" y="88" width="2" height="3" fill="#fff"/><rect x="504" y="88" width="2" height="3" fill="#fff"/><rect x="494" y="92" width="9" height="2" fill="#2f7bd3"/><rect x="504" y="92" width="2" height="2" fill="#fff"/><rect x="494" y="95" width="3" height="4" fill="#d9822b"/><rect x="498" y="95" width="8" height="4" fill="#fff"/><rect x="498" y="93" width="12" height="11" fill="#f3f3f3"/><rect x="499" y="94" width="10" height="9" fill="#6d6d6d"/><rect x="500" y="95" width="8" height="7" fill="#fff"/><rect x="502" y="97" width="4" height="1" fill="#5b3b2d"/><rect x="502" y="99" width="4" height="1" fill="#5b3b2d"/><path d="M505.5,95.8 L502.5,101" stroke="#5b3b2d" stroke-width="0.9"/></svg>
<svg style="left:488px;top:106px" width="24" height="22" viewBox="488 106 24 22"><rect x="493" y="110" width="16" height="13" fill="#6d6d6d"/><rect x="494" y="111" width="2" height="3" fill="#fff"/><rect x="497" y="111" width="3" height="3" fill="#fff"/><rect x="501" y="111" width="3" height="3" fill="#fff"/><rect x="505" y="111" width="3" height="3" fill="#fff"/><rect x="494" y="115" width="2" height="3" fill="#fff"/><rect x="497" y="115" width="3" height="3" fill="#c5d5ee"/><rect x="501" y="115" width="3" height="3" fill="#c5d5ee"/><rect x="505" y="115" width="3" height="3" fill="#fff"/><rect x="494" y="119" width="2" height="3" fill="#fff"/><rect x="497" y="119" width="3" height="3" fill="#c5d5ee"/><rect x="501" y="119" width="3" height="3" fill="#fff"/><rect x="505" y="119" width="3" height="3" fill="#fff"/><path d="M510,111 L511,114 L504,122 L501,120 Z" fill="#f3f3f3"/><path d="M509.5,112.5 V116 L505,121 L503,119.5 Z" fill="#6d6d6d"/><path d="M497,126 Q497.5,121.5 501.5,120 L504,121.5 Q503.5,125.5 497,126 Z" fill="#2f7bd3"/></svg>
<svg style="left:488px;top:129px" width="24" height="22" viewBox="488 129 24 22"><rect x="493" y="133" width="16" height="13" fill="#6d6d6d"/><rect x="494" y="134" width="2" height="2" fill="#fff"/><rect x="497" y="134" width="8" height="2" fill="#fff"/><rect x="506" y="134" width="2" height="2" fill="#fff"/><rect x="494" y="137" width="2" height="5" fill="#fff"/><rect x="497" y="137" width="11" height="5" fill="#c5d5ee"/><rect x="494" y="143" width="2" height="2" fill="#fff"/><rect x="497" y="143" width="11" height="2" fill="#fff"/><path d="M510,134 L511,137 L504,145 L501,143 Z" fill="#f3f3f3"/><path d="M509.5,135.5 V139 L505,144 L503,142.5 Z" fill="#6d6d6d"/><path d="M497,149 Q497.5,144.5 501.5,143 L504,144.5 Q503.5,148.5 497,149 Z" fill="#2f7bd3"/></svg>
<div class="t" style="left:511.40px;top:90px;font-size:12px;color:#262626;letter-spacing:0.069px;">Условное форматирование</div>
<svg style="left:667px;top:95px;" width="6" height="4" viewBox="0 0 6 4"><path d="M0,0 H5 L2.5,2.8 Z" fill="#6d6d6d"/></svg>
<div class="t" style="left:511.40px;top:113px;font-size:12px;color:#262626;letter-spacing:0.044px;">Форматировать как таблицу</div>
<svg style="left:671px;top:118px;" width="6" height="4" viewBox="0 0 6 4"><path d="M0,0 H5 L2.5,2.8 Z" fill="#6d6d6d"/></svg>
<div class="t" style="left:511.40px;top:136px;font-size:12px;color:#262626;">Стили ячеек</div>
<svg style="left:583px;top:141px;" width="6" height="4" viewBox="0 0 6 4"><path d="M0,0 H5 L2.5,2.8 Z" fill="#6d6d6d"/></svg>
<div class="t" style="left:570.40px;top:160px;font-size:11px;color:#262626;letter-spacing:-0.126px;">Стили</div>
<svg style="left:698px;top:84px" width="24" height="22" viewBox="698 84 24 22"><rect x="701" y="87" width="11" height="5" fill="#6d6d6d"/><rect x="702" y="88" width="4" height="3" fill="#fff"/><rect x="707" y="88" width="4" height="3" fill="#fff"/><rect x="708" y="92" width="11" height="5" fill="#6d6d6d"/><rect x="709" y="93" width="4" height="3" fill="#c2cfe0"/><rect x="714" y="93" width="4" height="3" fill="#c2cfe0"/><rect x="701" y="96" width="11" height="8" fill="#6d6d6d"/><rect x="702" y="97" width="4" height="3" fill="#fff"/><rect x="707" y="97" width="4" height="3" fill="#fff"/><rect x="702" y="101" width="4" height="2" fill="#fff"/><rect x="707" y="101" width="4" height="2" fill="#fff"/><path d="M702.5,94.5 H708 M705,91.8 L702.3,94.5 L705,97.2" fill="none" stroke="#2f7bd3" stroke-width="1.8"/></svg>
<div class="t" style="left:720.40px;top:91px;font-size:12px;color:#262626;letter-spacing:-0.239px;">Вставить</div>
<svg style="left:779px;top:95px;" width="6" height="4" viewBox="0 0 6 4"><path d="M0,0 H5 L2.5,2.8 Z" fill="#6d6d6d"/></svg>
<svg style="left:698px;top:107px" width="24" height="22" viewBox="698 107 24 22"><rect x="701" y="110" width="11" height="5" fill="#6d6d6d"/><rect x="702" y="111" width="4" height="3" fill="#fff"/><rect x="707" y="111" width="4" height="3" fill="#fff"/><rect x="704" y="115" width="7" height="5" fill="#6d6d6d"/><rect x="705" y="116" width="5" height="3" fill="#c2cfe0"/><rect x="701" y="120" width="11" height="7" fill="#6d6d6d"/><rect x="702" y="121" width="4" height="2" fill="#fff"/><rect x="707" y="121" width="4" height="2" fill="#fff"/><rect x="702" y="124" width="4" height="2" fill="#fff"/><rect x="707" y="124" width="4" height="2" fill="#fff"/><path d="M710.5,113.5 L718,121 M718,113.5 L710.5,121" stroke="#e8962f" stroke-width="1.5"/></svg>
<div class="t" style="left:720.40px;top:114px;font-size:12px;color:#262626;letter-spacing:-0.105px;">Удалить</div>
<svg style="left:775px;top:118px;" width="6" height="4" viewBox="0 0 6 4"><path d="M0,0 H5 L2.5,2.8 Z" fill="#6d6d6d"/></svg>
<svg style="left:698px;top:130px" width="24" height="22" viewBox="698 130 24 22"><rect x="702" y="133" width="1" height="3" fill="#2f7bd3"/><rect x="714" y="133" width="1" height="3" fill="#2f7bd3"/><rect x="703" y="134" width="11" height="1" fill="#2f7bd3"/><rect x="701" y="137" width="16" height="12" fill="#6d6d6d"/><rect x="702" y="138" width="4" height="3" fill="#fff"/><rect x="707" y="138" width="4" height="3" fill="#fff"/><rect x="712" y="138" width="4" height="3" fill="#fff"/><rect x="702" y="142" width="4" height="3" fill="#fff"/><rect x="707" y="141" width="5" height="4" fill="#2f7bd3"/><rect x="712" y="142" width="4" height="3" fill="#fff"/><rect x="702" y="146" width="4" height="2" fill="#fff"/><rect x="707" y="146" width="4" height="2" fill="#fff"/><rect x="712" y="146" width="4" height="2" fill="#fff"/></svg>
<div class="t" style="left:720.40px;top:136px;font-size:12px;color:#262626;letter-spacing:0.312px;">Формат</div>
<svg style="left:767px;top:141px;" width="6" height="4" viewBox="0 0 6 4"><path d="M0,0 H5 L2.5,2.8 Z" fill="#6d6d6d"/></svg>
<div class="t" style="left:722.40px;top:160px;font-size:12px;color:#262626;">Ячейки</div>
<svg style="left:810px;top:84px" width="22" height="22" viewBox="810 84 22 22"><path d="M827,90 V88 H814.5 L821,94.5 L814.5,101 H827 V99" fill="none" stroke="#5b3b2d" stroke-width="1.9" stroke-linejoin="miter"/></svg>
<svg style="left:835px;top:94px;" width="6" height="4" viewBox="0 0 6 4"><path d="M0,0 H5 L2.5,2.8 Z" fill="#6d6d6d"/></svg>
<div class="t" style="left:848.40px;top:86px;font-size:9px;color:#2f7bd3;font-weight:700;">А</div>
<div class="t" style="left:848.40px;top:95px;font-size:9px;color:#6d6d6d;">Я</div>
<svg style="left:856px;top:92px;" width="9" height="8" viewBox="0 0 9 8"><path d="M0.5,0.5 H8 L5.2,3.5 V7.5 H3.3 V3.5 Z" fill="#6d6d6d"/></svg>
<svg style="left:868px;top:94px;" width="6" height="4" viewBox="0 0 6 4"><path d="M0,0 H5 L2.5,2.8 Z" fill="#6d6d6d"/></svg>
<svg style="left:812px;top:109px;" width="18" height="18" viewBox="0 0 18 18"><rect x="2.5" y="1.5" width="13.5" height="15" fill="#fff" stroke="#6d6d6d" stroke-width="1"/><rect x="2.5" y="1.5" width="13.5" height="2" fill="#888"/><path d="M9.3,5 V13 M5.8,9.5 L9.3,13 L12.8,9.5" fill="none" stroke="#2f7bd3" stroke-width="1.8"/></svg>
<svg style="left:833px;top:117px;" width="6" height="4" viewBox="0 0 6 4"><path d="M0,0 H5 L2.5,2.8 Z" fill="#6d6d6d"/></svg>
<svg style="left:848px;top:110px;" width="16" height="16" viewBox="0 0 16 16"><circle cx="9.5" cy="6" r="3.8" fill="#fff" stroke="#2f7bd3" stroke-width="1.6"/><path d="M6.5,9 L2,13.5" stroke="#2f7bd3" stroke-width="2.2"/></svg>
<svg style="left:868px;top:117px;" width="6" height="4" viewBox="0 0 6 4"><path d="M0,0 H5 L2.5,2.8 Z" fill="#6d6d6d"/></svg>
<svg style="left:812px;top:132px;" width="18" height="17" viewBox="0 0 18 17"><path d="M3,10.5 L11.5,2 L16,6.5 L7.5,15 Z" fill="#f1c27e"/><path d="M8,5.5 L12,9.5" stroke="#d9a55f" stroke-width="0.8" stroke-dasharray="1,1"/></svg>
<svg style="left:833px;top:140px;" width="6" height="4" viewBox="0 0 6 4"><path d="M0,0 H5 L2.5,2.8 Z" fill="#6d6d6d"/></svg>
<div class="t" style="left:799.40px;top:160px;font-size:12px;color:#262626;letter-spacing:-0.171px;">Редактирование</div>
<svg style="left:922px;top:162px;" width="14" height="9" viewBox="0 0 14 9"><path d="M1.5,6.5 L6.5,1.5 L11.5,6.5" fill="none" stroke="#6d6d6d" stroke-width="1.1"/></svg>
<div class="a" style="left:22px;top:184px;width:102px;height:26px;background:#c6c6c6;"></div>
<div class="a" style="left:23px;top:185px;width:100px;height:24px;background:#ffffff;"></div>
<div class="t" style="left:28.40px;top:192px;font-size:12px;color:#262626;letter-spacing:0.592px;">C14</div>
<svg style="left:110px;top:194px;" width="8" height="5" viewBox="0 0 8 5"><path d="M0,0 H7 L3.5,3.6 Z" fill="#6d6d6d"/></svg>
<div class="a" style="left:138px;top:192px;width:2px;height:2px;background:#9a9a9a;"></div>
<div class="a" style="left:138px;top:197px;width:2px;height:2px;background:#9a9a9a;"></div>
<div class="a" style="left:138px;top:202px;width:2px;height:2px;background:#9a9a9a;"></div>
<div class="a" style="left:154px;top:184px;width:110px;height:26px;background:#c6c6c6;"></div>
<div class="a" style="left:155px;top:185px;width:108px;height:24px;background:#ffffff;"></div>
<svg style="left:166px;top:191px;" width="14" height="12" viewBox="0 0 14 12"><path d="M1.5,1.5 L11.5,10.5 M11.5,1.5 L1.5,10.5" stroke="#c2c2c2" stroke-width="1.3"/></svg>
<svg style="left:202px;top:191px;" width="16" height="12" viewBox="0 0 16 12"><path d="M1.5,6 L5.5,10 L13.5,1.5" fill="none" stroke="#c2c2c2" stroke-width="1.6"/></svg>
<div class="t" style="left:239px;top:188px;font-family:Liberation Serif,serif;font-style:italic;font-size:15px;color:#555">f<span style="font-size:12px;margin-left:-0.5px">x</span></div>
<div class="a" style="left:266px;top:184px;width:672px;height:26px;background:#c6c6c6;"></div>
<div class="a" style="left:267px;top:185px;width:670px;height:24px;background:#ffffff;"></div>
<svg style="left:924px;top:192px;" width="10" height="8" viewBox="0 0 10 8"><path d="M1,1.5 L5,5.5 L9,1.5" fill="none" stroke="#6d6d6d" stroke-width="1.8"/></svg>
<div class="a" style="left:925px;top:222px;width:15px;height:441px;background:#ababab;"></div>
<div class="a" style="left:926px;top:223px;width:13px;height:13px;background:#ffffff;"></div>
<div class="a" style="left:926px;top:237px;width:13px;height:391px;background:#ffffff;"></div>
<div class="a" style="left:926px;top:628px;width:13px;height:20px;background:#d6d6d6;"></div>
<div class="a" style="left:926px;top:649px;width:13px;height:13px;background:#ffffff;"></div>
<svg style="left:928px;top:226px;" width="9" height="6" viewBox="0 0 9 6"><path d="M0.8,4.6 H7.6 L4.2,1 Z" fill="#6d6d6d"/></svg>
<svg style="left:928px;top:654px;" width="9" height="6" viewBox="0 0 9 6"><path d="M0.8,1 H7.6 L4.2,4.6 Z" fill="#6d6d6d"/></svg>
<div class="a" style="left:17px;top:663px;width:926px;height:27px;background:#e5e5e5;"></div>
<div class="a" style="left:117px;top:662px;width:60px;height:25px;background:#ffffff;"></div>
<div class="a" style="left:117px;top:662px;width:1px;height:25px;background:#ababab;"></div>
<div class="a" style="left:176px;top:662px;width:1px;height:25px;background:#ababab;"></div>
<div class="a" style="left:117px;top:685px;width:60px;height:2px;background:#217346;"></div>
<div class="t" style="left:129.40px;top:668px;font-size:13px;color:#217346;font-weight:700;letter-spacing:-0.688px;">Лист1</div>
<svg style="left:43px;top:671px;" width="8" height="9" viewBox="0 0 8 9"><path d="M6,0.5 V8 L1.5,4.2 Z" fill="#c8c8c8"/></svg>
<svg style="left:72px;top:671px;" width="8" height="9" viewBox="0 0 8 9"><path d="M1.5,0.5 V8 L6,4.2 Z" fill="#c8c8c8"/></svg>
<svg style="left:208px;top:667px;" width="20" height="18" viewBox="0 0 20 18"><circle cx="9.8" cy="8.8" r="7.6" fill="none" stroke="#6d6d6d" stroke-width="1.2"/><path d="M9.8,4.8 V12.8 M5.8,8.8 H13.8" stroke="#6d6d6d" stroke-width="1.5"/></svg>
<div class="a" style="left:572px;top:671px;width:2px;height:2px;background:#9a9a9a;"></div>
<div class="a" style="left:572px;top:675px;width:2px;height:2px;background:#9a9a9a;"></div>
<div class="a" style="left:572px;top:679px;width:2px;height:2px;background:#9a9a9a;"></div>
<div class="a" style="left:589px;top:669px;width:333px;height:15px;background:#ababab;"></div>
<div class="a" style="left:590px;top:670px;width:13px;height:13px;background:#ffffff;"></div>
<div class="a" style="left:604px;top:670px;width:275px;height:13px;background:#ffffff;"></div>
<div class="a" style="left:879px;top:670px;width:28px;height:13px;background:#d6d6d6;"></div>
<div class="a" style="left:908px;top:670px;width:13px;height:13px;background:#ffffff;"></div>
<svg style="left:593px;top:672px;" width="8" height="9" viewBox="0 0 8 9"><path d="M6,0.5 V8 L1.5,4.2 Z" fill="#6d6d6d"/></svg>
<svg style="left:912px;top:672px;" width="8" height="9" viewBox="0 0 8 9"><path d="M1.5,0.5 V8 L6,4.2 Z" fill="#6d6d6d"/></svg>
<div class="a" style="left:17px;top:690px;width:926px;height:1px;background:#d6d6d6;"></div>
<div class="a" style="left:17px;top:691px;width:926px;height:21px;background:#f3f3f3;"></div>
<svg style="left:20px;top:690px" width="24" height="22" viewBox="20 690 24 22"><circle cx="28" cy="697" r="3" fill="#777"/><rect x="32" y="695" width="6" height="3" fill="#6d6d6d"/><rect x="37" y="695" width="1" height="12" fill="#6d6d6d"/><rect x="26" y="701" width="1" height="6" fill="#6d6d6d"/><rect x="26" y="706" width="12" height="1" fill="#6d6d6d"/><rect x="31" y="700" width="2" height="1" fill="#6d6d6d"/><rect x="34" y="700" width="2" height="1" fill="#6d6d6d"/><rect x="28" y="702" width="2" height="1" fill="#6d6d6d"/><rect x="31" y="702" width="2" height="1" fill="#6d6d6d"/><rect x="34" y="702" width="2" height="1" fill="#6d6d6d"/><rect x="28" y="704" width="2" height="1" fill="#6d6d6d"/><rect x="31" y="704" width="2" height="1" fill="#6d6d6d"/><rect x="34" y="704" width="2" height="1" fill="#6d6d6d"/></svg>
<div class="a" style="left:630px;top:691px;width:39px;height:21px;background:#c8c8c8;"></div>
<svg style="left:641px;top:693px;" width="15" height="15" viewBox="0 0 15 15"><path d="M1.5,1.5 H13.5 V13.5 H1.5 Z M1.5,5.5 H13.5 M1.5,9.5 H13.5 M5.5,1.5 V13.5 M9.5,1.5 V13.5" fill="none" stroke="#6d6d6d" stroke-width="1.2"/></svg>
<svg style="left:681px;top:693px;" width="16" height="15" viewBox="0 0 16 15"><rect x="1.5" y="1.5" width="13" height="12" fill="none" stroke="#6d6d6d" stroke-width="1.1"/><rect x="4.5" y="3.5" width="7" height="8" fill="none" stroke="#6d6d6d" stroke-width="1"/><path d="M6,5.5 H10 M6,7.5 H10 M6,9.5 H10" fill="none" stroke="#6d6d6d" stroke-width="1"/></svg>
<svg style="left:721px;top:693px;" width="16" height="15" viewBox="0 0 16 15"><path d="M1.5,1.5 H14.5 V13.5 H1.5 Z M1.5,9.5 H9.5 V1.5 M5.5,1.5 V9.5" fill="none" stroke="#6d6d6d" stroke-width="1.1"/></svg>
<div class="a" style="left:755px;top:700px;width:7px;height:1px;background:#6d4a3a;"></div>
<div class="a" style="left:768px;top:701px;width:100px;height:1px;background:#a0a0a0;"></div>
<div class="a" style="left:815px;top:697px;width:6px;height:10px;background:#6d6d6d;"></div>
<svg style="left:871px;top:695px;" width="12" height="12" viewBox="0 0 12 12"><path d="M5.8,1 V11 M0.8,6 H10.8" stroke="#6d4a3a" stroke-width="1.2"/></svg>
<div class="t" style="left:893.40px;top:697px;font-size:11px;color:#262626;letter-spacing:-0.251px;">100 %</div>
<div class="a" style="left:156px;top:499px;width:132px;height:2px;background:#217346;"></div>
<div class="a" style="left:156px;top:520px;width:128px;height:2px;background:#217346;"></div>
<div class="a" style="left:156px;top:499px;width:2px;height:23px;background:#217346;"></div>
<div class="a" style="left:286px;top:499px;width:2px;height:18px;background:#217346;"></div>
<div class="a" style="left:283px;top:517px;width:7px;height:7px;background:#ffffff;"></div>
<div class="a" style="left:284px;top:518px;width:5px;height:5px;background:#217346;"></div>
<svg style="left:27px;top:224px;" width="13" height="13" viewBox="0 0 13 13"><path d="M12,0.5 V12 H0.5 Z" fill="#a3a3a3"/></svg>
</body></html>
